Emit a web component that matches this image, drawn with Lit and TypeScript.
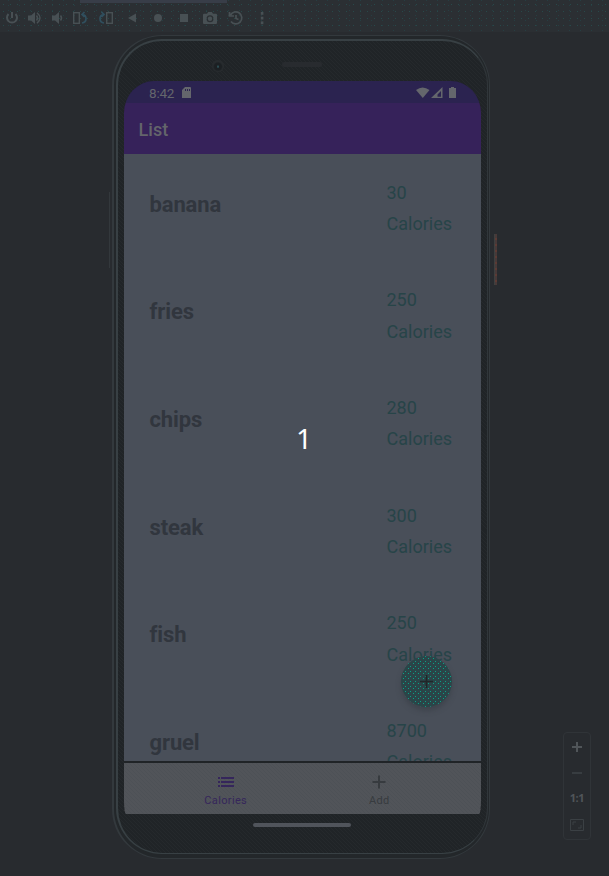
import { LitElement, html, css, svg } from "lit";
import { customElement } from "lit/decorators.js";

const foods = [
  { name: "banana", calories: 30 },
  { name: "fries", calories: 250 },
  { name: "chips", calories: 280 },
  { name: "steak", calories: 300 },
  { name: "fish", calories: 250 },
  { name: "gruel", calories: 8700 },
];

const stroke = "#485054";
const tools = [
  svg`<path d="M4.5 4A5 5 0 1 0 11.500 4M8 2V8" fill="none" stroke=${stroke} stroke-width="2"/>`,
  svg`<path d="M1 5.500H4L8 2V14L4 10.500H1Z" fill=${stroke}/><path d="M9.500 5.500Q11.500 8 9.500 10.500M10 2.800Q16 8 10 13.200" fill="none" stroke=${stroke} stroke-width="1.500"/>`,
  svg`<path d="M3 5.500H6L10 2V14L6 10.500H3Z" fill=${stroke}/><path d="M11.500 5.500Q13.500 8 11.500 10.500" fill="none" stroke=${stroke} stroke-width="1.500"/>`,
  svg`<rect x="1.700" y="2.700" width="5.600" height="10.600" fill="none" stroke=${stroke} stroke-width="1.400"/><path d="M10 13Q14 12.500 14 8.500Q14 5 10.500 4.500M12.500 2L10 4.500L12.500 7" fill="none" stroke="#304f5e" stroke-width="1.700"/>`,
  svg`<rect x="8.700" y="2.700" width="5.600" height="10.600" fill="none" stroke=${stroke} stroke-width="1.400"/><path d="M6 13Q2 12.500 2 8.500Q2 5 5.500 4.500M3.500 2L6 4.500L3.500 7" fill="none" stroke="#304f5e" stroke-width="1.700"/>`,
  svg`<path d="M12 3.500V12.500L4 8Z" fill=${stroke}/>`,
  svg`<circle cx="8" cy="8" r="4" fill=${stroke}/>`,
  svg`<rect x="4" y="4" width="8" height="8" fill=${stroke}/>`,
  svg`<path fill-rule="evenodd" d="M2 3.800H5L6.200 2H9.800L11 3.800H14Q15 3.800 15 5V13Q15 14 14 14H2Q1 14 1 13V5Q1 3.800 2 3.800ZM8 5.200A3.500 3.500 0 1 0 8 12.200A3.500 3.500 0 1 0 8 5.200Z" fill=${stroke}/><circle cx="8" cy="8.700" r="2.200" fill=${stroke}/>`,
  svg`<path d="M2.500 5A6 6 0 1 1 3 11.500M1.500 2V6H6M8 5V8.500L10.500 9.500" fill="none" stroke=${stroke} stroke-width="1.700"/>`,
  svg`<rect x="6.800" y="2" width="2.600" height="2.800" fill=${stroke}/><rect x="6.800" y="6.700" width="2.600" height="2.800" fill=${stroke}/><rect x="6.800" y="11.400" width="2.600" height="2.800" fill=${stroke}/>`,
];

@customElement("emulator-toolbar")
class EmulatorToolbar extends LitElement {
  static styles = css`
    :host { display: block; height: 32px; background-color: #2b2f33;
      background-image: radial-gradient(circle, #28494a 0.6px, transparent 0.8px), radial-gradient(circle, #263e42 0.6px, transparent 0.8px);
      background-size: 7px 7px, 11px 5px; background-position: 0 1px, 3px 3px; }
    .progress { height: 3px; width: 147px; margin-left: 80px; background: #383d48; }
    .tools { display: grid; grid-template-columns: 23px 22px 23px 26px 26px 26px 26px 26px 26px 26px 24px; padding-left: 4px; margin-top: 7px; }
    svg { display: block; width: 16px; height: 16px; }
  `;
  render() {
    return html`<div class="progress"></div>
      <div class="tools">${tools.map((t) => html`<svg viewBox="0 0 16 16">${t}</svg>`)}</div>`;
  }
}

@customElement("food-row")
class FoodRow extends LitElement {
  static properties = { name: {}, calories: { type: Number } };
  declare name: string;
  declare calories: number;
  static styles = css`
    :host { display: grid; grid-template-columns: 237px 1fr; box-sizing: border-box; height: 107.65px; padding: 22.600px 0 0 25.500px; }
    .name { font: 700 22px/31px Roboto, sans-serif; color: #31363e; padding-top: 12px; letter-spacing: -0.12px; }
    .value { font: 400 18px/31.500px Roboto, sans-serif; color: #274448; }
  `;
  render() {
    return html`<div class="name">${this.name}</div>
      <div class="value"><div>${this.calories}</div><div>Calories</div></div>`;
  }
}

@customElement("phone-screen")
class PhoneScreen extends LitElement {
  static styles = css`
    :host { display: flex; flex-direction: column; position: relative; width: 357px; height: 733px; overflow: hidden;
      border-radius: 30px 30px 2px 2px / 32px 32px 14px 14px; font-family: Roboto, sans-serif; background: #202427; }
    .status { display: flex; align-items: center; box-sizing: border-box; height: 22px; padding: 2px 23px 0 25px; background: #2b2350; color: #64666c; font-size: 13.500px; flex: none; }
    .time { width: 32px; letter-spacing: -0.2px; }
    .status svg { display: block; }
    .signals { margin-left: auto; }
    .bar { height: 51px; box-sizing: border-box; padding: 1px 0 0 14.500px; background: #36225a; color: #64656b; font-weight: 500; font-size: 18px; line-height: 51px; letter-spacing: 0.1px; flex: none; }
    .list { height: 607px; overflow: hidden; background: #494f59; flex: none; }
    .nav { display: grid; grid-template-columns: 1fr 1fr; box-sizing: border-box; height: 51px; margin-top: 2px; padding: 0 25px; background-color: #515459;
      background-image: repeating-linear-gradient(45deg, #4d5156 0 0.7px, transparent 0.7px 2.800px); }
    .tab { display: flex; flex-direction: column; align-items: center; padding-top: 9px; font-size: 11px; line-height: 16px; letter-spacing: 0.35px; color: #373b3f; }
    .tab svg { display: block; width: 20px; height: 20px; margin-bottom: 1px; }
    .active { color: #35265b; }
    .fab { position: absolute; left: 277px; top: 575px; width: 51px; height: 51px; border-radius: 50%; display: grid; place-items: center;
      background-color: #2a4548; box-shadow: 0 4px 5px #343b4188;
      background-image: radial-gradient(circle, #0b9f87 0.75px, transparent 0.95px), radial-gradient(circle, #0b9f87 0.75px, transparent 0.95px);
      background-size: 5px 5px; background-position: 0 0, 2px 3px; }
    .fab svg { display: block; width: 13px; height: 13px; }
  `;
  render() {
    return html`
      <div class="status">
        <span class="time">8:42</span>
        <svg width="11" height="12" viewBox="0 0 11 12"><path fill="#64666c" fill-rule="evenodd" d="M4 0H9Q10 0 10 1V11H1V3ZM4 2V4H5V2ZM6 2V4H7V2ZM8 2V4H9V2Z"/></svg>
        <svg class="signals" width="42" height="14" viewBox="0 0 42 14">
          <path fill="#64666c" d="M0 4Q6.500 -1 13.500 4L6.800 12Z"/>
          <path fill="#64666c" fill-rule="evenodd" d="M26.500 1V12H15ZM25 5L21.500 8.500V10.700H25Z"/>
          <path fill="#64666c" d="M35 1H38V2H40V12H33V2H35Z"/>
        </svg>
      </div>
      <div class="bar">List</div>
      <div class="list">${foods.map((f) => html`<food-row .name=${f.name} .calories=${f.calories}></food-row>`)}</div>
      <div class="nav">
        <div class="tab active">
          <svg viewBox="0 0 20 20"><path d="M2 6H4M5 6H18M2 10H4M5 10H18M2 14H4M5 14H18" stroke="#35265b" stroke-width="2"/></svg>
          Calories
        </div>
        <div class="tab">
          <svg viewBox="0 0 20 20"><path d="M10 3.500V16.500M3.500 10H16.500" stroke="#373b3f" stroke-width="2"/></svg>
          Add
        </div>
      </div>
      <div class="fab"><svg viewBox="0 0 13 13"><path d="M6.500 0V13M0 6.500H13" stroke="#202628" stroke-width="1.700"/></svg></div>`;
  }
}

@customElement("zoom-controls")
class ZoomControls extends LitElement {
  static styles = css`
    :host { display: flex; flex-direction: column; align-items: center; box-sizing: border-box; width: 28px; height: 108px; border: 1px solid #303438; border-radius: 4px; padding-top: 1px; }
    .cell { display: grid; place-items: center; height: 26px; color: #505559; font: 700 11px/20px "Open Sans", "Noto Sans", sans-serif; letter-spacing: -0.4px; }
    .ratio { padding-bottom: 2px; box-sizing: border-box; }
    svg { display: block; }
  `;
  render() {
    return html`
      <div class="cell"><svg width="10" height="10"><path d="M5 0V10M0 5H10" stroke="#505559" stroke-width="2"/></svg></div>
      <div class="cell"><svg width="10" height="2"><path d="M0 1H10" stroke="#383d41" stroke-width="2"/></svg></div>
      <div class="cell ratio">1:1</div>
      <div class="cell"><svg width="14" height="12" viewBox="0 0 14 12"><path d="M.5.5H13.500V11.500H.5ZM3 6V3H6M8 9H11V6" fill="none" stroke="#3b4044"/></svg></div>`;
  }
}

@customElement("app-root")
class AppRoot extends LitElement {
  static styles = css`
    :host { display: block; position: relative; width: 609px; height: 876px; overflow: hidden; background: #282b2f; }
    .stage { display: grid; grid-template-columns: 112px 378px 1fr; padding-top: 3px; }
    .phone { box-sizing: border-box; width: 378px; height: 824px; border-radius: 50px; border: 1px solid #33393d; border-left-width: 2px; background: #23272a; padding: 3px 1px 4px 2px; }
    .rim { box-sizing: border-box; height: 815px; border: 2px solid #384044; border-right: 1px solid #30363a; border-bottom-width: 1px; border-radius: 46px; padding: 0 0 0 6px;
      border-top-color: #384044; background-color: #202427; background-image: repeating-linear-gradient(45deg, #25292c 0 0.7px, transparent 0.7px 2.800px); }
    .forehead { height: 40px; display: flex; align-items: center; }
    .camera { width: 12px; height: 12px; border-radius: 50%; background: radial-gradient(circle at 50% 55%, #2b4b51 0 0.8px, #1c2023 1.500px 3.500px, #272b2e 5px); margin: 9px 0 0 88px; }
    .speaker { width: 40px; height: 5px; border-radius: 3px; background: #282b2f; margin: 6px 0 0 58px; }
    .chin { padding: 9px 0 0 129px; }
    .handle { width: 98px; height: 4px; border-radius: 2px; background: #50545b; }
    .side { display: flex; flex-direction: column; }
    .power { width: 2px; height: 51px; margin: 199px 0 0 4px; background: repeating-linear-gradient(#483938 0 4px, #5c3a34 4px 6px); border-left: 1px solid #3e4040; }
    .volume { width: 1px; height: 76px; margin: 157px 0 0 109px; background: #33383c; }
    zoom-controls { margin: 447px 0 0 73px; }
    .count { position: absolute; left: 295px; top: 418px; width: 18px; text-align: center; font: 400 28px/40px "Noto Sans", sans-serif; color: #fff; }
  `;
  render() {
    return html`
      <emulator-toolbar></emulator-toolbar>
      <div class="stage">
        <div><div class="volume"></div></div>
        <div class="phone"><div class="rim">
          <div class="forehead"><div class="camera"></div><div class="speaker"></div></div>
          <phone-screen></phone-screen>
          <div class="chin"><div class="handle"></div></div>
        </div></div>
        <div class="side"><div class="power"></div><zoom-controls></zoom-controls></div>
      </div>
      <div class="count">1</div>`;
  }
}
